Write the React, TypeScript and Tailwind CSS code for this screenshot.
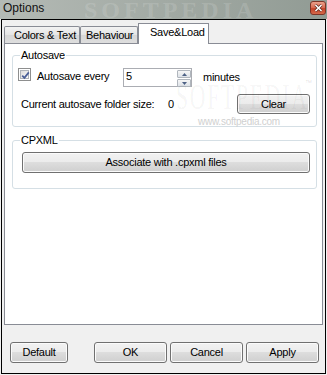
import React from "react";

const btn =
  "flex items-center justify-center rounded-[3px] border border-[#707070] bg-[linear-gradient(#f2f2f2_0%,#ebebeb_50%,#dddddd_50%,#cfcfcf_100%)] shadow-[inset_0_0_0_1px_#fbfbfb] text-[11px] leading-[13px] text-black whitespace-nowrap";

function Checkbox() {
  return (
    <div className="w-[13px] h-[13px] border border-[#8e8f8f] bg-white p-[1px] shrink-0">
      <div className="w-full h-full border border-[#aeb3b9] bg-[linear-gradient(135deg,#dcdcdc,#fbfbfb)] relative">
        <svg width="9" height="9" viewBox="0 0 9 9" className="absolute left-0 top-0">
          <path d="M1.2 4.6 L3.4 6.9 L7.8 1.4" fill="none" stroke="#4a5f97" strokeWidth="1.7" />
        </svg>
      </div>
    </div>
  );
}

function SpinBtn({ up }: { up?: boolean }) {
  return (
    <div className="w-[14px] h-[8px] border border-[#b0b6bd] rounded-[1px] bg-[linear-gradient(#f6f6f6,#dde2e8)] flex items-center justify-center">
      <svg width="5" height="3" viewBox="0 0 5 3">
        {up ? <path d="M0 3 L2.5 0 L5 3 Z" fill="#4d6185" /> : <path d="M0 0 L2.5 3 L5 0 Z" fill="#4d6185" />}
      </svg>
    </div>
  );
}

function Tab({ label, cls, selected }: { label: string; cls: string; selected?: boolean }) {
  if (selected)
    return (
      <div
        className={`${cls} h-[21px] mb-[-1px] relative z-10 bg-white border-t border-l border-r border-[#898c95] pt-[2px] text-[11px] leading-[13px] whitespace-nowrap`}
      >
        {label}
      </div>
    );
  return (
    <div
      className={`${cls} h-[17px] border-t border-l border-r border-[#898c95] bg-[linear-gradient(#f3f3f3,#e4e4e4_50%,#d7d7d7_51%,#dedede)] flex items-center text-[11px] leading-[13px] rounded-t-[2px] whitespace-nowrap`}
    >
      {label}
    </div>
  );
}

export default function App() {
  return (
    <div className="w-[327px] h-[375px] bg-[#f0f0f0] overflow-hidden relative font-['Liberation_Sans',Arial,sans-serif] text-black tracking-[-0.25px]">
      {/* Title bar */}
      <div className="h-[19px] flex items-start justify-between bg-[linear-gradient(90deg,#b4bab5,#a2aaa4_50%,#919b94)] relative overflow-hidden">
        <span className="pl-[3px] pt-[1px] text-[12px] leading-[15px] text-[#111] tracking-normal">Options</span>
        <span className="absolute left-[84px] top-[-2px] text-[24px] leading-[24px] font-bold tracking-[4px] font-['Liberation_Serif',serif] text-white/15 pointer-events-none">
          SOFTPEDIA
        </span>
        <div className="mt-[1px] mr-[1px] w-[16px] h-[14px] rounded-[3px] border border-[#7d3527] bg-[linear-gradient(#eba08b,#d7674e_50%,#c44127_55%,#d66a4c)] flex items-center justify-center relative z-10">
          <svg width="9" height="8" viewBox="0 0 9 8">
            <path d="M1.5 1 L7.5 7 M7.5 1 L1.5 7" stroke="#5a2a20" strokeWidth="3" />
            <path d="M1.5 1 L7.5 7 M7.5 1 L1.5 7" stroke="#ffffff" strokeWidth="1.6" />
          </svg>
        </div>
      </div>

      {/* Window frame */}
      <div className="ml-[1px] w-[325px] h-[355px] border border-black bg-[#f0f0f0] flex flex-col">
        <div className="flex flex-col px-[2px] pt-[3px]">
          <div className="flex items-end h-[20px]">
            <Tab label="Colors & Text" cls="w-[76px] pl-[9px]" />
            <Tab label="Behaviour" cls="w-[58px] pl-[5px]" />
            <Tab label="Save&Load" cls="w-[71px] pl-[11px]" selected />
          </div>
          <div className="h-[282px] border border-[#898c95] bg-white flex flex-col text-[11px] leading-[13px]">
            {/* Autosave group */}
            <div className="ml-[7px] mt-[11px] w-[305px] h-[72px] border border-[#d5dfe5] rounded-[3px] relative flex flex-col">
              <span className="absolute left-[7px] top-[-7px] bg-white px-[1px]">Autosave</span>
              <div className="flex items-start mt-[12px]">
                <div className="ml-[5px]">
                  <Checkbox />
                </div>
                <span className="ml-[6px] mt-[2px] w-[86px] whitespace-nowrap">Autosave every</span>
                <div className="w-[69px] h-[19px] border border-[#abadb3] flex items-start justify-between">
                  <span className="pl-[2px] pt-[1px]">5</span>
                  <div className="flex flex-col gap-[1px] pt-[1px]">
                    <SpinBtn up />
                    <SpinBtn />
                  </div>
                </div>
                <span className="ml-[11px] mt-[3px]">minutes</span>
              </div>
              <div className="flex items-center mt-[7px]">
                <span className="ml-[8px] w-[147px] whitespace-nowrap">Current autosave folder size:</span>
                <span>0</span>
                <div className={`${btn} ml-auto mr-[6px] w-[73px] h-[20px]`}>Clear</div>
              </div>
            </div>

            {/* CPXML group */}
            <div className="ml-[7px] mt-[13px] w-[305px] h-[49px] border border-[#d5dfe5] rounded-[3px] relative flex flex-col">
              <span className="absolute left-[7px] top-[-7px] bg-white px-[1px]">CPXML</span>
              <div className={`${btn} ml-[9px] mr-[6px] mt-[11px] h-[21px]`}>Associate with .cpxml files</div>
            </div>
          </div>
        </div>

        {/* Bottom buttons */}
        <div className="flex items-start mt-[17px] pl-[8px]">
          <div className={`${btn} w-[58px] h-[21px]`}>Default</div>
          <div className={`${btn} ml-[26px] w-[73px] h-[21px] border-[#3c7fb1] shadow-[inset_0_0_0_1px_#c4e5f6]`}>OK</div>
          <div className={`${btn} ml-[3px] w-[73px] h-[21px]`}>Cancel</div>
          <div className={`${btn} ml-[3px] w-[73px] h-[21px]`}>Apply</div>
        </div>
      </div>

      {/* Softpedia watermark overlay */}
      <span className="absolute left-[176px] top-[84px] block origin-left scale-x-[0.6] text-[36px] leading-[27px] font-['Liberation_Serif',serif] text-black/[0.05] tracking-[3px] whitespace-nowrap pointer-events-none select-none">
        SOFTPEDIA
      </span>
      <span className="absolute left-[305px] top-[79px] text-[7px] leading-[8px] text-black/15 pointer-events-none">™</span>
      <span className="absolute left-[198px] top-[116px] text-[10px] leading-[11px] text-[#d0d0d0] pointer-events-none">
        www.softpedia.com
      </span>
    </div>
  );
}
